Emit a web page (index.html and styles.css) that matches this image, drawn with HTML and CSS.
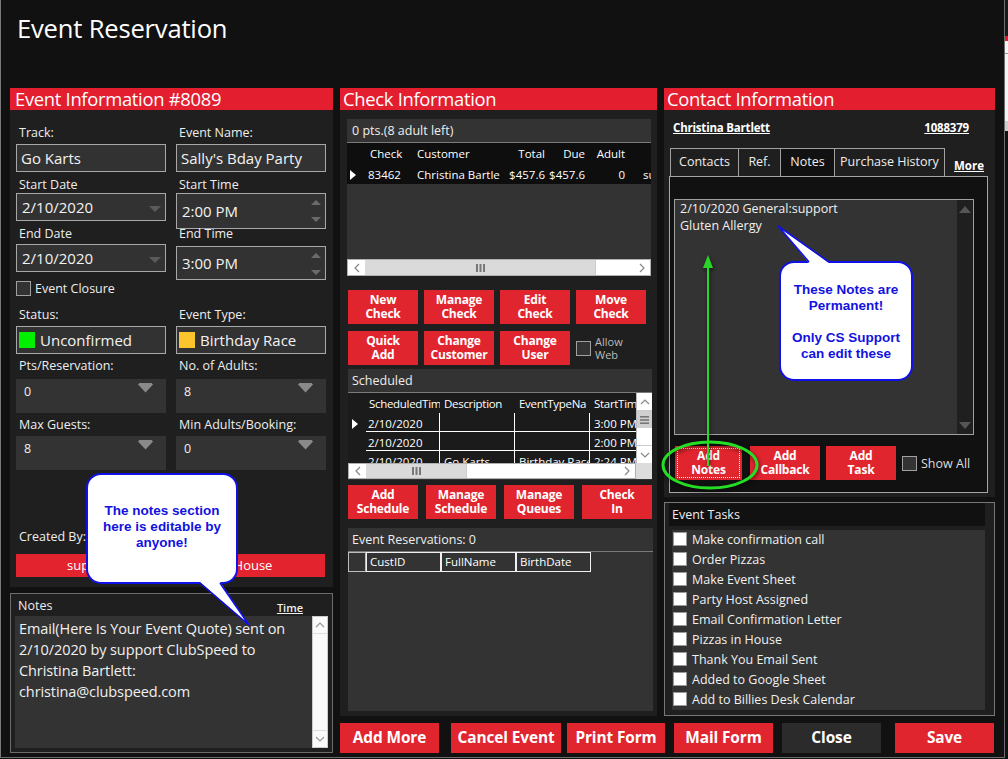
FILE: index.html
```html
<!DOCTYPE html>
<html>
<head>
<meta charset="utf-8">
<link rel="stylesheet" href="styles.css">
</head>
<body>
<div class="window">
  <div class="title">Event Reservation</div>
  <div class="main">
    <!-- LEFT COLUMN -->
    <section class="col-left">
      <div class="panel ei">
        <div class="panel-head ph-left">Event Information #8089</div>
        <div class="panel-body ei-body">
          <div class="frow r1">
            <div class="field"><div class="lbl">Track:</div><div class="inp inp-a">Go Karts</div></div>
            <div class="field"><div class="lbl">Event Name:</div><div class="inp inp-a">Sally's Bday Party</div></div>
          </div>
          <div class="frow r2">
            <div class="field"><div class="lbl">Start Date</div><div class="inp inp-b">2/10/2020<svg class="dd" width="12" height="6" viewBox="0 0 12 6"><polygon points="0,0 12,0 6,6" fill="#5a5a5a"/></svg></div></div>
            <div class="field"><div class="lbl">Start Time</div><div class="inp inp-c">2:00 PM<svg class="spin" width="10" height="22" viewBox="0 0 10 22"><polygon points="5,0 10,5 0,5" fill="#6a6a6a"/><polygon points="0,17 10,17 5,22" fill="#6a6a6a"/></svg></div></div>
          </div>
          <div class="frow r3">
            <div class="field"><div class="lbl">End Date</div><div class="inp inp-d">2/10/2020<svg class="dd" width="12" height="6" viewBox="0 0 12 6"><polygon points="0,0 12,0 6,6" fill="#5a5a5a"/></svg></div></div>
            <div class="field"><div class="lbl">End Time</div><div class="inp inp-e">3:00 PM<svg class="spin" width="10" height="22" viewBox="0 0 10 22"><polygon points="5,0 10,5 0,5" fill="#6a6a6a"/><polygon points="0,17 10,17 5,22" fill="#6a6a6a"/></svg></div></div>
          </div>
          <div class="closure"><span class="cb"></span><span>Event Closure</span></div>
          <div class="frow r4">
            <div class="field"><div class="lbl">Status:</div><div class="inp inp-f"><span class="sq sq-green"></span>Unconfirmed</div></div>
            <div class="field"><div class="lbl">Event Type:</div><div class="inp inp-f"><span class="sq sq-yellow"></span>Birthday Race</div></div>
          </div>
          <div class="frow r5">
            <div class="field"><div class="lbl">Pts/Reservation:</div><div class="box">0<svg class="tri" width="15" height="10" viewBox="0 0 15 10"><polygon points="0,1.5 1.5,0 13.5,0 15,1.5 7.5,9.5" fill="#8a8a8a"/></svg></div></div>
            <div class="field"><div class="lbl">No. of Adults:</div><div class="box">8<svg class="tri" width="15" height="10" viewBox="0 0 15 10"><polygon points="0,1.5 1.5,0 13.5,0 15,1.5 7.5,9.5" fill="#8a8a8a"/></svg></div></div>
          </div>
          <div class="frow r6">
            <div class="field"><div class="lbl">Max Guests:</div><div class="box">8<svg class="tri" width="15" height="10" viewBox="0 0 15 10"><polygon points="0,1.5 1.5,0 13.5,0 15,1.5 7.5,9.5" fill="#8a8a8a"/></svg></div></div>
            <div class="field"><div class="lbl">Min Adults/Booking:</div><div class="box">0<svg class="tri" width="15" height="10" viewBox="0 0 15 10"><polygon points="0,1.5 1.5,0 13.5,0 15,1.5 7.5,9.5" fill="#8a8a8a"/></svg></div></div>
          </div>
          <div class="frow rc">
            <div class="lbl">Created By:</div>
            <div class="lbl">Location:</div>
          </div>
          <div class="created-bar"><span>support</span><span>In House</span></div>
        </div>
      </div>
      <div class="notes-panel">
        <div class="notes-head"><span>Notes</span><span class="time-link">Time</span></div>
        <div class="notes-area">
          <div class="notes-text">Email(Here Is Your Event Quote) sent on 2/10/2020 by support ClubSpeed to Christina Bartlett: christina@clubspeed.com</div>
          <div class="vscroll-w">
            <div class="vs-arr"><svg width="10" height="6" viewBox="0 0 10 6"><polyline points="1,5 5,1 9,5" fill="none" stroke="#999" stroke-width="1.2"/></svg></div>
            <div class="vs-fill"></div>
            <div class="vs-arr"><svg width="10" height="6" viewBox="0 0 10 6"><polyline points="1,1 5,5 9,1" fill="none" stroke="#999" stroke-width="1.2"/></svg></div>
          </div>
        </div>
      </div>
    </section>

    <!-- MIDDLE COLUMN -->
    <section class="panel check">
      <div class="panel-head">Check Information</div>
      <div class="panel-body check-body">
        <div class="cbox">
          <div class="cbox-head">0 pts.(8 adult left)</div>
          <div class="cgrid">
            <div class="crow chead">
              <span class="c-rh"></span><span class="c-chk">Check</span><span class="c-cus">Customer</span><span class="c-tot">Total</span><span class="c-due">Due</span><span class="c-ad">Adult</span><span class="c-us"></span>
            </div>
            <div class="crow">
              <span class="c-rh"><svg width="6" height="10" viewBox="0 0 6 10"><polygon points="0,0 6,5 0,10" fill="#fff"/></svg></span><span class="c-chk">83462</span><span class="c-cus">Christina Bartle</span><span class="c-tot">$457.6</span><span class="c-due">$457.6</span><span class="c-ad">0</span><span class="c-us">su</span>
            </div>
          </div>
          <div class="cgray"></div>
          <div class="hs hs1">
            <div class="hs-arr"><svg width="6" height="10" viewBox="0 0 6 10"><polyline points="5,1 1,5 5,9" fill="none" stroke="#888" stroke-width="1.2"/></svg></div>
            <div class="hs-thumb t1"><svg width="9" height="8" viewBox="0 0 9 8"><rect x="0" y="0" width="2" height="8" fill="#777"/><rect x="3.5" y="0" width="2" height="8" fill="#777"/><rect x="7" y="0" width="2" height="8" fill="#777"/></svg></div>
            <div class="hs-rest"></div>
            <div class="hs-arr"><svg width="6" height="10" viewBox="0 0 6 10"><polyline points="1,1 5,5 1,9" fill="none" stroke="#888" stroke-width="1.2"/></svg></div>
          </div>
        </div>

        <div class="btnrow br1">
          <div class="btn">New<br>Check</div>
          <div class="btn">Manage<br>Check</div>
          <div class="btn">Edit<br>Check</div>
          <div class="btn">Move<br>Check</div>
        </div>
        <div class="btnrow br2">
          <div class="btn">Quick<br>Add</div>
          <div class="btn">Change<br>Customer</div>
          <div class="btn">Change<br>User</div>
          <div class="allow"><span class="cb"></span><span class="allow-t">Allow<br>Web</span></div>
        </div>

        <div class="sbox">
          <div class="sbox-head">Scheduled</div>
          <div class="sgrid-wrap">
            <div class="sgrid">
              <div class="srow shead"><span class="s-rh"></span><span class="s-c1">ScheduledTim</span><span class="s-c2">Description</span><span class="s-c3">EventTypeNa</span><span class="s-c4">StartTim</span></div>
              <div class="srow sdata"><span class="s-rh"><svg width="6" height="10" viewBox="0 0 6 10"><polygon points="0,0 6,5 0,10" fill="#fff"/></svg></span><span class="s-c1">2/10/2020</span><span class="s-c2"></span><span class="s-c3"></span><span class="s-c4">3:00 PM</span></div>
              <div class="srow sdata"><span class="s-rh"></span><span class="s-c1">2/10/2020</span><span class="s-c2"></span><span class="s-c3"></span><span class="s-c4">2:00 PM</span></div>
              <div class="srow sdata"><span class="s-rh"></span><span class="s-c1">2/10/2020</span><span class="s-c2">Go Karts</span><span class="s-c3">Birthday Race</span><span class="s-c4">2:24 PM</span></div>
            </div>
            <div class="vs2">
              <div class="vs2-arr"><svg width="10" height="6" viewBox="0 0 10 6"><polyline points="1,5 5,1 9,5" fill="none" stroke="#888" stroke-width="1.2"/></svg></div>
              <div class="vs2-thumb"><svg width="9" height="8" viewBox="0 0 9 8"><rect x="0" y="0" width="9" height="1.6" fill="#777"/><rect x="0" y="3.2" width="9" height="1.6" fill="#777"/><rect x="0" y="6.4" width="9" height="1.6" fill="#777"/></svg></div>
              <div class="vs2-rest"></div>
              <div class="vs2-arr"><svg width="10" height="6" viewBox="0 0 10 6"><polyline points="1,1 5,5 9,1" fill="none" stroke="#888" stroke-width="1.2"/></svg></div>
            </div>
          </div>
          <div class="hs-line">
            <div class="hs hs2">
              <div class="hs-arr"><svg width="6" height="10" viewBox="0 0 6 10"><polyline points="5,1 1,5 5,9" fill="none" stroke="#888" stroke-width="1.2"/></svg></div>
              <div class="hs-thumb t2"><svg width="9" height="8" viewBox="0 0 9 8"><rect x="0" y="0" width="2" height="8" fill="#777"/><rect x="3.5" y="0" width="2" height="8" fill="#777"/><rect x="7" y="0" width="2" height="8" fill="#777"/></svg></div>
              <div class="hs-rest"></div>
              <div class="hs-arr"><svg width="6" height="10" viewBox="0 0 6 10"><polyline points="1,1 5,5 1,9" fill="none" stroke="#888" stroke-width="1.2"/></svg></div>
            </div>
            <div class="corner"></div>
          </div>
        </div>

        <div class="btnrow br3">
          <div class="btn">Add<br>Schedule</div>
          <div class="btn">Manage<br>Schedule</div>
          <div class="btn">Manage<br>Queues</div>
          <div class="btn">Check<br>In</div>
        </div>

        <div class="rbox">
          <div class="rbox-head">Event Reservations: 0</div>
          <div class="rhead"><span class="r-rh"></span><span class="r-c">CustID</span><span class="r-c">FullName</span><span class="r-c">BirthDate</span></div>
        </div>
      </div>
    </section>

    <!-- RIGHT COLUMN -->
    <section class="col-right">
      <div class="panel contact">
        <div class="panel-head">Contact Information</div>
        <div class="panel-body contact-body">
          <div class="cname"><span>Christina Bartlett</span><span>1088379</span></div>
          <div class="tabs">
            <span class="tab t-contacts">Contacts</span><span class="tab t-ref">Ref.</span><span class="tab active t-notes">Notes</span><span class="tab t-ph">Purchase History</span><span class="more">More</span>
          </div>
          <div class="tab-content">
            <div class="cnotes">
              <div class="cnotes-text">2/10/2020 General:support<br>Gluten Allergy</div>
              <div class="cn-scroll">
                <svg width="12" height="7" viewBox="0 0 12 7"><polygon points="6,0 12,7 0,7" fill="#555"/></svg>
                <svg width="12" height="7" viewBox="0 0 12 7"><polygon points="0,0 12,0 6,7" fill="#555"/></svg>
              </div>
            </div>
            <div class="nbtns">
              <div class="btn b-notes"><span class="focus">Add<br>Notes</span></div>
              <div class="btn b-cb">Add<br>Callback</div>
              <div class="btn b-task">Add<br>Task</div>
              <div class="showall"><span class="cb"></span><span>Show All</span></div>
            </div>
          </div>
        </div>
      </div>
      <div class="tasks">
        <div class="tasks-head">Event Tasks</div>
        <div class="tasks-list">
          <div class="task"><span class="wcb"></span>Make confirmation call</div>
          <div class="task"><span class="wcb"></span>Order Pizzas</div>
          <div class="task"><span class="wcb"></span>Make Event Sheet</div>
          <div class="task"><span class="wcb"></span>Party Host Assigned</div>
          <div class="task"><span class="wcb"></span>Email Confirmation Letter</div>
          <div class="task"><span class="wcb"></span>Pizzas in House</div>
          <div class="task"><span class="wcb"></span>Thank You Email Sent</div>
          <div class="task"><span class="wcb"></span>Added to Google Sheet</div>
          <div class="task"><span class="wcb"></span>Add to Billies Desk Calendar</div>
        </div>
      </div>
    </section>

    <!-- BOTTOM BAR -->
    <div class="bottom-bar">
      <div class="bbtn">Add More</div>
      <div class="bbtn b2">Cancel Event</div>
      <div class="bbtn b3">Print Form</div>
      <div class="bbtn b4">Mail Form</div>
      <div class="bbtn b5 dark">Close</div>
      <div class="bbtn b6">Save</div>
    </div>
  </div>

  <!-- OVERLAYS: annotation callouts -->
  <div class="callout co1">
    <div class="co-text">The notes section<br>here is editable by<br>anyone!</div>
  </div>
  <svg class="tail tail1" width="60" height="50" viewBox="0 0 60 50"><polygon points="0,0 20,0 49,43" fill="#fff"/><polyline points="0,1 49,43 20,1" fill="none" stroke="#1010e8" stroke-width="1.6"/></svg>

  <div class="callout co2">
    <div class="co-text">These Notes are<br>Permanent!<br>&nbsp;<br>Only CS Support<br>can edit these</div>
  </div>
  <svg class="tail tail2" width="56" height="40" viewBox="0 0 56 40"><polygon points="0,0 31,37 51,37" fill="#fff"/><polyline points="31,36 0,0 51,36" fill="none" stroke="#1010e8" stroke-width="1.6"/></svg>

  <svg class="annot" width="110" height="240" viewBox="0 0 110 240">
    <line x1="54" y1="214" x2="54" y2="16" stroke="#2ad52a" stroke-width="2"/>
    <polygon points="54,3 49,16 59,16" fill="#2ad52a"/>
    <ellipse cx="56" cy="213" rx="47" ry="23" fill="none" stroke="#26dd26" stroke-width="3"/>
  </svg>
</div>
<div class="strip">
  <div class="s-dark"></div><div class="s-red"></div><div class="s-white"></div><div class="s-gray"></div>
</div>
</body>
</html>
```

FILE: styles.css
```css
* { box-sizing: border-box; }
html, body { margin: 0; padding: 0; }
body {
  width: 1008px; height: 759px; overflow: hidden;
  background: #111;
  font-family: "Open Sans", "Noto Sans", "DejaVu Sans", sans-serif;
  color: #fff;
  display: flex;
}
.window {
  position: relative;
  width: 1005px; height: 758px;
  border-left: 1px solid #7a7a7a;
  border-right: 1px solid #6e6e6e;
  border-bottom: 1px solid #6e6e6e;
  background: #111;
}
.title {
  height: 88px;
  padding: 12px 0 0 16px;
  font-size: 25.6px;
  line-height: 34px;
  letter-spacing: -0.2px;
}
.main {
  display: grid;
  grid-template-columns: 323px 317px 331px;
  grid-template-rows: 628px 30px;
  column-gap: 7px;
  row-gap: 7px;
  padding-left: 9px;
}
.col-left { grid-row: 1 / 3; grid-column: 1; display: flex; flex-direction: column; gap: 6px; }
.check { grid-row: 1; grid-column: 2; }
.col-right { grid-row: 1; grid-column: 3; display: flex; flex-direction: column; gap: 5px; }
.bottom-bar { grid-row: 2; grid-column: 2 / 4; display: flex; }

.panel { display: flex; flex-direction: column; }
.panel-head {
  height: 22px; background: #e21e2f;
  font-size: 18.4px; line-height: 22px; padding-left: 3px;
  letter-spacing: -0.3px;
}
.ph-left { padding-left: 5px; }
.panel-body { background: #1f1f1f; flex: 1; }

/* Event info */
.ei { height: 499px; }
.ei-body { padding: 15px 8px 0 6px; }
.frow { display: grid; grid-template-columns: 150px 150px; column-gap: 10px; }
.lbl { position: relative; font-size: 12.5px; line-height: 16px; height: 16px; color: #eee; padding-left: 3px; white-space: nowrap; }
.inp {
  position: relative;
  background: #323232; border: 1px solid #a8a8a8;
  display: flex; align-items: center;
  font-size: 15px; padding-left: 4px; color: #f2f2f2;
}
.r1 { height: 52px; }
.r2 { height: 48px; }
.r3 { height: 55px; }
.r3 .lbl { top: 1px; }
.inp-a { height: 28px; margin-top: 3px; }
.inp-b { height: 28px; padding-left: 5px; }
.inp-c { height: 36px; padding-left: 5px; }
.inp-d { height: 28px; margin-top: 3px; padding-left: 5px; }
.inp-e { height: 34px; margin-top: 5px; padding-left: 5px; }
.dd { position: absolute; right: 4px; top: 12px; }
.spin { position: absolute; right: 4px; top: 6px; }
.closure { height: 16px; display: flex; align-items: center; gap: 4px; font-size: 12.5px; color: #eee; margin-bottom: 11px; }
.cb { display: inline-block; width: 15px; height: 15px; background: #333; border: 1px solid #a0a0a0; flex: none; }
.r4 { height: 51px; }
.inp-f { height: 28px; margin-top: 3px; padding-left: 2px; }
.sq { width: 16px; height: 16px; margin-right: 5px; flex: none; }
.sq-green { background: #00f000; }
.sq-yellow { background: #fbc52d; }
.r5 { height: 59px; }
.r6 { height: 59px; }
.box {
  position: relative; background: #333; height: 34px;
  font-size: 12.5px; line-height: 16px; padding: 5px 0 0 8px; color: #eee;
}
.r5 .box { margin-top: 5px; }
.r6 .box { margin-top: 3px; }
.tri { position: absolute; left: 122px; top: 4px; }
.rc { height: 25px; margin-top: 53px; }
.created-bar {
  display: grid; grid-template-columns: 150px 159px;
  height: 23px; background: #e3242f; font-size: 13px; line-height: 23px; text-align: center;
}

/* notes */
.notes-panel {
  flex: 1; border: 1px solid #6c6c6c; background: #1f1f1f;
  padding: 0 4px 4px 4px; display: flex; flex-direction: column;
}
.notes-head { height: 22px; display: flex; justify-content: space-between; align-items: flex-end; font-size: 12.5px; color: #eee; padding: 0 25px 2px 3px; }
.time-link { font-size: 11px; font-weight: 600; text-decoration: underline; line-height: 12px; }
.notes-area { flex: 1; background: #333; display: flex; }
.notes-text { flex: 1; font-size: 14.5px; line-height: 21px; padding: 2px 4px 0 4px; color: #f0f0f0; letter-spacing: -0.1px; }
.vscroll-w { width: 16px; background: #fafafa; border: 1px solid #ccc; display: flex; flex-direction: column; }
.vs-arr { height: 16px; display: flex; align-items: center; justify-content: center; }
.vs-fill { flex: 1; border-top: 1px solid #ddd; border-bottom: 1px solid #ddd; }

/* check info */
.check-body { padding: 9px 6px 0 7px; }
.cbox { background: #333; height: 157px; display: flex; flex-direction: column; }
.cbox-head { height: 24px; border-bottom: 1px solid #7a7a7a; font-size: 12.5px; line-height: 23px; padding-left: 5px; color: #eee; }
.cgrid { background: #0e0e0e; height: 41px; }
.crow { display: flex; height: 21px; align-items: center; font-size: 11.5px; white-space: nowrap; }
.chead { height: 21px; }
.crow span { display: block; overflow: hidden; }
.c-rh { width: 18px; padding-left: 3px; display: flex !important; align-items: center; }
.c-chk { width: 49px; padding-left: 3px; }
.c-cus { width: 86px; padding-left: 3px; }
.c-tot { width: 48px; text-align: right; padding-right: 3px; }
.c-due { width: 40px; text-align: right; padding-right: 3px; }
.c-ad { width: 40px; text-align: right; padding-right: 3px; }
.c-us { flex: 1; padding-left: 15px; }
.chead .c-chk { padding-left: 5px; }
.cgray { flex: 1; }
.hs { display: flex; height: 17px; background: #fff; border: 1px solid #b0b0b0; }
.hs-arr { width: 17px; display: flex; align-items: center; justify-content: center; flex: none; }
.hs-thumb { background: #dadada; display: flex; align-items: center; justify-content: center; flex: none; }
.t1 { width: 230px; }
.t2 { width: 100px; }
.hs-rest { flex: 1; border-left: 1px solid #ccc; }

.btnrow { display: flex; gap: 6px; margin-left: 1px; }
.br1 { margin-top: 14px; }
.br2 { margin-top: 7px; }
.br3 { margin-top: 5px; gap: 8px; }
.btn {
  width: 70px; height: 34px; background: #e1252f;
  font-size: 12px; font-weight: 700; line-height: 14.5px; text-align: center;
  display: flex; align-items: center; justify-content: center; letter-spacing: -0.2px;
  flex: none;
}
.allow { display: flex; align-items: center; gap: 4px; }
.allow-t { font-size: 11px; line-height: 13px; color: #bbb; }

.sbox { margin: 4px 0 0 1px; width: 304px; height: 111px; background: #333; display: flex; flex-direction: column; }
.sbox-head { height: 24px; border-bottom: 1px solid #7a7a7a; font-size: 12.5px; line-height: 23px; padding-left: 4px; color: #eee; }
.sgrid-wrap { display: flex; height: 70px; }
.sgrid { flex: 1; background: #1b1b1b; overflow: hidden; }
.srow { display: flex; height: 19px; font-size: 11.5px; white-space: nowrap; }
.shead { height: 20px; align-items: center; letter-spacing: -0.3px; }
.srow span { display: block; overflow: hidden; }
.s-rh { width: 18px; flex: none; padding: 4px 0 0 4px; }
.s-c1 { width: 74px; flex: none; padding-left: 3px; }
.s-c2 { width: 75px; flex: none; padding-left: 4px; }
.s-c3 { width: 75px; flex: none; padding-left: 4px; }
.s-c4 { width: 46px; flex: none; padding-left: 4px; }
.sdata .s-c1, .sdata .s-c2, .sdata .s-c3, .sdata .s-c4 { border-bottom: 1px solid #fff; line-height: 19px; padding-top: 1px; }
.sdata .s-c1, .sdata .s-c2, .sdata .s-c3 { border-right: 1px solid #fff; }
.sdata .s-c1 { padding-left: 2px; }
.vs2 { width: 16px; background: #fff; border-left: 1px solid #bbb; display: flex; flex-direction: column; }
.vs2-arr { height: 18px; display: flex; align-items: center; justify-content: center; border-bottom: 1px solid #ccc; }
.vs2-arr:last-child { border-bottom: 0; border-top: 1px solid #ccc; }
.vs2-thumb { height: 17px; background: #cfcfcf; display: flex; align-items: center; justify-content: center; }
.vs2-rest { flex: 1; }
.hs-line { display: flex; height: 16px; }
.hs2 { flex: 1; height: 16px; }
.corner { width: 16px; background: #dcdcdc; }

.rbox { margin: 9px 0 0 1px; width: 305px; height: 183px; background: #333; }
.rbox-head { height: 24px; border-bottom: 1px solid #7a7a7a; font-size: 12.5px; line-height: 23px; padding-left: 4px; color: #eee; }
.rhead { display: flex; height: 20px; }
.r-rh { width: 18px; border: 1px solid #bdbdbd; }
.r-c { width: 75px; border: 1px solid #f0f0f0; font-size: 11.5px; line-height: 18px; padding-left: 3px; }

/* contact */
.contact { height: 409px; }
.contact-body { padding: 0 6px 0 5px; display: flex; flex-direction: column; }
.cname { height: 38px; display: flex; justify-content: space-between; font-size: 11.5px; font-weight: 700; text-decoration: underline; padding: 10px 20px 0 4px; letter-spacing: -0.2px; }
.tabs { display: flex; height: 28px; padding-left: 1px; align-items: flex-end; }
.tab { height: 28px; border: 1px solid #a0a0a0; border-bottom: 0; font-size: 12.5px; line-height: 26px; text-align: center; background: #1f1f1f; color: #eee; }
.t-contacts { width: 69px; }
.t-ref { width: 42px; border-left: 0; }
.t-notes { width: 54px; border-left: 0; }
.t-ph { width: 110px; border-left: 0; }
.tab.active { background: #111; }
.more { font-size: 11.5px; font-weight: 700; text-decoration: underline; margin-left: 9px; line-height: 16px; padding-bottom: 2px; }
.tab-content { height: 317px; width: 319px; border: 1px solid #a6a6a6; border-top: 0; background: #111; padding: 23px 0 0 4px; position: relative; }
.tab-content::before { content: ""; position: absolute; top: 0; left: 0; right: 0; border-top: 1px solid #a6a6a6; }
.cnotes { width: 300px; height: 236px; border: 1px solid #a0a0a0; background: #333; display: flex; }
.cnotes-text { flex: 1; font-size: 12.5px; line-height: 17px; padding: 0 0 0 5px; color: #f0f0f0; }
.cn-scroll { width: 16px; background: #1f1f1f; display: flex; flex-direction: column; justify-content: space-between; align-items: center; padding: 6px 0 5px; }
.nbtns { display: flex; margin-top: 11px; align-items: center; }
.b-notes { width: 67px; margin-left: 1px; }
.b-cb { margin-left: 8px; }
.b-task { margin-left: 6px; }
.focus { border: 1px dotted #fff; width: 63px; height: 30px; display: flex; align-items: center; justify-content: center; }
.showall { display: flex; align-items: center; gap: 4px; margin-left: 6px; font-size: 12.5px; color: #ddd; }

.tasks { height: 214px; border: 1px solid #777; background: #1f1f1f; padding: 0 9px 5px 4px; display: flex; flex-direction: column; }
.tasks-head { height: 23px; background: #111; font-size: 12.5px; line-height: 23px; padding-left: 3px; color: #eee; }
.tasks-list { margin: 4px 0 0 3px; flex: 1; background: #333; padding-top: 0; }
.task { height: 20px; display: flex; align-items: center; font-size: 12.5px; color: #f0f0f0; }
.task:first-child { margin-top: -1px; }
.wcb { width: 14px; height: 14px; background: #fff; border: 1px solid #999; margin: 0 5px 0 1px; flex: none; }

/* bottom */
.bbtn {
  width: 99px; height: 30px; background: #e1252f; flex: none;
  font-size: 15.4px; font-weight: 700; line-height: 30px; text-align: center; white-space: nowrap;
  letter-spacing: -0.1px;
}
.b2 { width: 110px; margin-left: 12px; }
.b3 { width: 98px; margin-left: 6px; }
.b4 { margin-left: 9px; }
.b5 { margin-left: 9px; }
.b6 { margin-left: 14px; }
.bbtn.dark { background: #2b2b2b; }

/* callouts */
.callout {
  position: absolute; background: #fff; border: 2px solid #1010e8; border-radius: 15px;
  font-family: "Liberation Sans", Arial, sans-serif; font-weight: 700; color: #1212e0;
  font-size: 13.5px; line-height: 16px; text-align: center;
}
.co1 { left: 85px; top: 473px; width: 152px; height: 111px; padding-top: 28px; }
.co2 { left: 778px; top: 261px; width: 134px; height: 120px; padding-top: 19px; }
.tail { position: absolute; overflow: visible; }
.tail1 { left: 199px; top: 582px; }
.tail2 { left: 777px; top: 226px; }
.annot { position: absolute; left: 653px; top: 252px; overflow: visible; filter: drop-shadow(1px 2px 2px rgba(0,0,0,0.6)); }

/* right strip */
.strip { width: 3px; height: 759px; display: flex; flex-direction: column; }
.s-dark { height: 36px; background: #1a1a1a; }
.s-red { height: 5px; background: #e21e2f; }
.s-white { height: 80px; background: #f4f4f4; box-shadow: inset 0 12px 0 #f4f4f4, inset 0 13px 0 #999; }
.s-gray { height: 10px; background: #cfcfcf; }
```
